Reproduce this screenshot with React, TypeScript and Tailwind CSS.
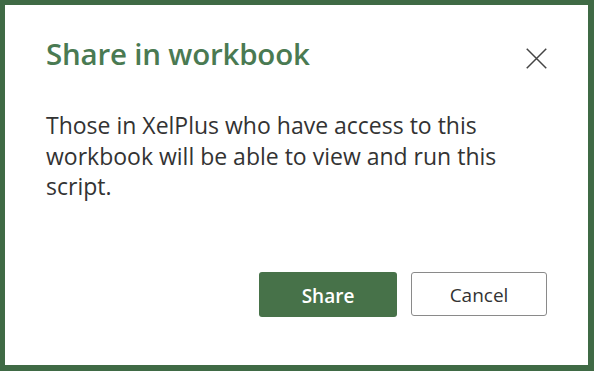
export default function App() {
  return (
    <div className="w-[594px] h-[371px] bg-[#3f6a45] pt-[5px] pl-[5px] pr-[6px] pb-[6px]" style={{ fontFamily: '"Open Sans", "Noto Sans", sans-serif' }}>
      <div className="w-full h-full bg-white flex flex-col pl-[41px] pr-[41px]">
        <div className="flex items-start justify-between pt-[29px]">
          <h1 className="text-[29.5px] leading-[40px] font-semibold text-[#4a7a52] tracking-[-0.2px]">Share in workbook</h1>
          <button className="mt-[14px] w-[21px] h-[21px] flex items-center justify-center text-[#444]">
            <svg width="21" height="21" viewBox="0 0 21 21" fill="none" stroke="currentColor" strokeWidth="1.5">
              <path d="M0.75 0.75L20.25 20.25M20.25 0.75L0.75 20.25" />
            </svg>
          </button>
        </div>
        <p className="mt-[36px] text-[23px] leading-[30.5px] text-[#333] w-[470px]">
          Those in XelPlus who have access to this workbook will be able to view and run this script.
        </p>
        <div className="mt-auto mb-[48px] flex justify-end gap-[14px]">
          <button className="w-[138px] h-[45px] pt-[3px] rounded-[3px] bg-[#477249] text-white text-[19px] font-semibold">Share</button>
          <button className="w-[136px] h-[44px] pt-[3px] rounded-[3px] border border-[#8a8a8a] bg-white text-[#333] text-[19px]">Cancel</button>
        </div>
      </div>
    </div>
  );
}
